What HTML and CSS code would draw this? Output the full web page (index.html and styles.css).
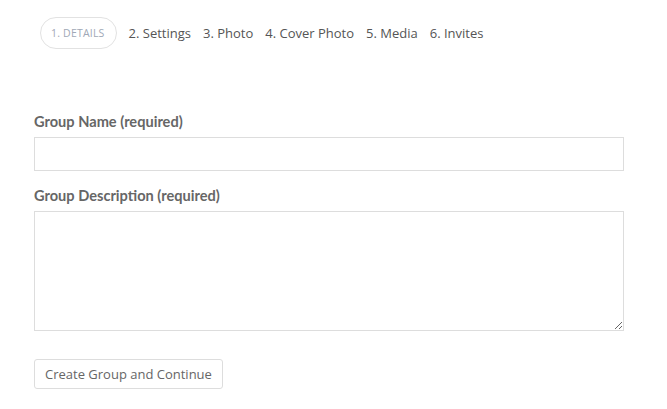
FILE: index.html
```html
<!DOCTYPE html>
<html lang="en">
<head>
    <meta charset="UTF-8">
    <meta name="viewport" content="width=device-width, initial-scale=1.0">
    <title>Create Group</title>
    <link rel="stylesheet" href="styles.css">
</head>
<body>
    <div class="container">
        <ul class="steps">
            <li class="current">1. Details</li>
            <li>2. Settings</li>
            <li>3. Photo</li>
            <li>4. Cover Photo</li>
            <li>5. Media</li>
            <li>6. Invites</li>
        </ul>

        <form class="group-form">
            <label for="groupName">Group Name (required)</label>
            <input type="text" id="groupName">

            <label for="groupDesc">Group Description (required)</label>
            <textarea id="groupDesc"></textarea>

            <button type="button" class="submit">Create Group and Continue</button>
        </form>
    </div>
</body>
</html>
```

FILE: styles.css
```css
body {
    font-family: "Open Sans", sans-serif;
    margin: 0;
    background: #fff;
}
.container {
    padding: 17px 43px 0 34px;
}
.steps {
    list-style: none;
    margin: 0;
    padding: 0 0 0 6px;
    display: flex;
    align-items: center;
    gap: 12px;
    font-size: 13px;
    color: #555;
}
.steps li {
    line-height: 30px;
}
.steps .current {
    border: 1px solid #e2e2e2;
    border-radius: 16px;
    padding: 0 11px 0 10px;
    font-size: 10.5px;
    letter-spacing: 0.2px;
    text-transform: uppercase;
    color: #a0a8b6;
}
.group-form {
    padding-top: 64px;
}
label {
    display: block;
    font-family: Lato, sans-serif;
    font-weight: bold;
    font-size: 14.6px;
    color: #666;
    line-height: 18px;
    margin-bottom: 6px;
}
input, textarea {
    display: block;
    width: 100%;
    box-sizing: border-box;
    border: 1px solid #ddd;
    border-radius: 0;
    margin: 0 0 16px;
    font-family: "Open Sans", sans-serif;
}
input {
    height: 34px;
}
textarea {
    height: 120px;
    resize: vertical;
    margin-bottom: 28px;
}
.submit {
    font-family: "Open Sans", sans-serif;
    font-size: 13px;
    color: #666;
    background: #fff;
    border: 1px solid #ddd;
    border-radius: 3px;
    height: 30px;
    padding: 0 10px;
}
```
